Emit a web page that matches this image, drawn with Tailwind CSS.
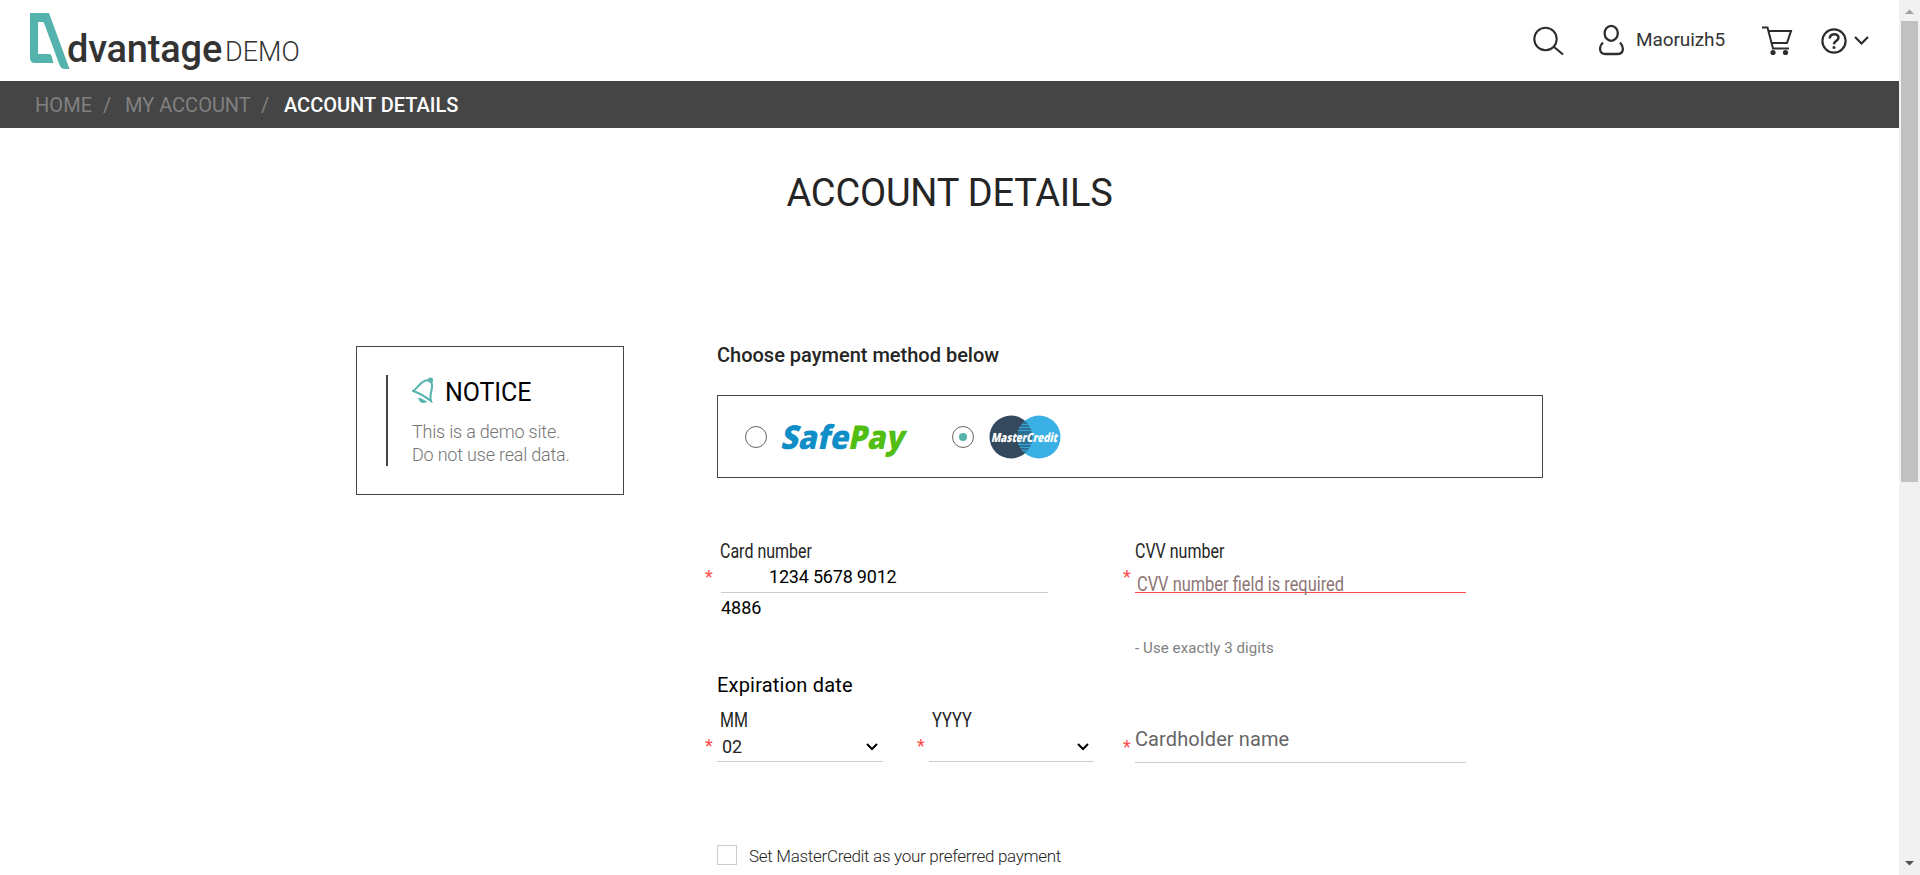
<!DOCTYPE html>
<html lang="en">
<head>
<meta charset="utf-8">
<title>Account details</title>
<script src="https://cdn.jsdelivr.net/npm/@tailwindcss/browser@4"></script>
</head>
<body class="flex h-[875px] overflow-hidden bg-white font-[Roboto,sans-serif] text-[#252525]">
<div class="w-[1899px] h-full overflow-hidden">
  <header class="flex h-[81px] items-start justify-between">
    <a class="flex pl-[29px] pt-[13px] whitespace-nowrap">
      <svg class="w-[41px] h-[57px] shrink-0" viewBox="0 0 41 57"><path fill="#55b3ad" fill-rule="evenodd" d="M1 0H20L40.500 56H36Q32 56 30.500 52L15 10Q14.500 9 13.500 9H9V41H20Q22 41 22.500 43L24.500 50H6Q1 50 1 45Z"/></svg>
      <span class="-ml-[3px] mt-[16px] h-[40px] w-[158px] text-[38px] leading-[40px] font-medium tracking-[-0.2px] text-[#333]">dvantage</span>
      <span class="mt-[19px] h-[40px] text-[27px] leading-[40px] font-light text-[#333]">DEMO</span>
    </a>
    <div class="flex pt-[24px] pr-[29px]">
      <svg class="w-[32px] h-[32px]" viewBox="0 0 32 32" fill="none" stroke="#2d2d2d" stroke-width="2.100"><circle cx="12.500" cy="15" r="11.200"/><path d="M20.500 22.500L30 30.500"/></svg>
      <svg class="ml-[34px] w-[26px] h-[32px]" viewBox="0 0 26 32" fill="none" stroke="#2d2d2d" stroke-width="2.300"><ellipse cx="12.200" cy="9.300" rx="6.600" ry="7.500"/><path d="M4 18.500C0 22 -.5 30 6.500 30H18C26 30 24.500 22 21 18.500"/></svg>
      <span class="ml-[11px] mt-[4px] h-[24px] w-[90px] text-[19px] leading-[24px] tracking-[-0.1px] text-[#333]">Maoruizh5</span>
      <svg class="ml-[36px] w-[32px] h-[32px]" viewBox="0 0 32 32" fill="none" stroke="#2d2d2d" stroke-width="2"><path d="M0 3.500H5.500L11 24.500H27M7 7H29L25 19H10"/><circle cx="11" cy="28.500" r="2.600" fill="#2d2d2d" stroke="none"/><circle cx="23.500" cy="28.500" r="2.600" fill="#2d2d2d" stroke="none"/></svg>
      <svg class="ml-[26px] w-[50px] h-[32px]" viewBox="0 0 50 32" fill="none" stroke="#2d2d2d" stroke-width="2.200"><circle cx="14" cy="17" r="11.600"/><path d="M9.800 14.500C9.800 9 18.500 9 18.500 13.800C18.500 17 14 16.500 14 20.300" stroke-width="2.500"/><circle cx="14" cy="23.600" r="1.500" fill="#2d2d2d" stroke="none"/><path d="M35 13L41.500 19.500L48 13"/></svg>
    </div>
  </header>
  <nav class="flex h-[47px] items-start bg-[#454545] pl-[35px] pt-[12px] text-[20px] leading-[24px] text-[#808080] whitespace-nowrap">
    <span class="w-[68px] tracking-[0.1px]">HOME</span><span class="w-[22px]">/</span>
    <span class="w-[136px]">MY ACCOUNT</span><span class="w-[23px]">/</span>
    <span class="font-medium text-white">ACCOUNT DETAILS</span>
  </nav>
  <h1 class="mt-[41px] flex h-[48px] justify-center text-[38px] leading-[48px] tracking-[-0.2px]">ACCOUNT DETAILS</h1>
  <main class="flex pl-[356px] pt-[126px]">
    <aside class="mt-[3px] h-[149px] w-[268px] shrink-0 border border-[#454545] pl-[29px] pt-[28px]">
      <div class="h-[91px] border-l-2 border-[#454545] pl-[24px]">
        <div class="flex h-[38px]">
          <svg class="mt-[2px] h-[26px] w-[22px]" viewBox="0 0 22 26" fill="none" stroke="#55b3ad" stroke-width="2"><path d="M1 14C6 12 8 3 16.500 3Q20 4 20 8.500C20.500 14 17 17 19 24C15 21 6 15.500 1 14Z"/><circle cx="18.500" cy="3" r="1.600"/><path d="M7.500 22Q9 26 13 24.500L8 22Z"/></svg>
          <span class="ml-[11px] mt-[2px] h-[32px] text-[25px] leading-[32px] tracking-[-0.1px] text-black">NOTICE</span>
        </div>
        <p class="mt-[7px] text-[18px] leading-[23px] font-light tracking-[-0.2px] text-[#757575] whitespace-nowrap">This is a demo site.<br>Do not use real data.</p>
      </div>
    </aside>
    <section class="ml-[93px] w-[826px]">
      <h2 class="h-[24px] text-[20px] leading-[24px] font-medium">Choose payment method below</h2>
      <div class="mt-[28px] flex h-[83px] items-center border border-[#454545] pl-[27px]">
        <span class="size-[22px] rounded-full border border-[#666]"></span>
        <svg class="ml-[13px] h-[54px] w-[130px] overflow-visible" viewBox="0 -5 130 54"><g transform="translate(0 34) skewX(-12)" font-family="Open Sans" font-weight="800" font-size="33"><text x="0" y="0" textLength="68" lengthAdjust="spacingAndGlyphs" fill="#108ec8">Safe</text><text x="67.500" y="0" textLength="56" lengthAdjust="spacingAndGlyphs" fill="#52be14">Pay</text></g></svg>
        <span class="ml-[42px] flex size-[22px] items-center justify-center rounded-full border border-[#666]"><i class="size-[8px] rounded-full bg-[#55b3ad]"></i></span>
        <svg class="ml-[14px] h-[44px] w-[74px]" viewBox="0 0 74 44"><circle cx="23" cy="22" r="21.500" fill="#34495e"/><circle cx="51" cy="22" r="21.500" fill="#3bb0e5"/><path d="M37 5.700A21.500 21.500 0 0 1 37 38.300A21.500 21.500 0 0 1 37 5.700" fill="#2d7194"/><path d="M34 9.500H42M31 12.500H44M30 15.500H45M30 29.500H45M32 32.500H43M34 35.500H41" stroke="#3bb0e5" stroke-width=".8"/><text transform="translate(3 26.500) skewX(-12)" font-family="Open Sans" font-weight="800" font-size="12.500" textLength="66" lengthAdjust="spacingAndGlyphs" fill="#fff">MasterCredit</text></svg>
      </div>
      <form class="-ml-[12px] mt-[61px] flex text-[18px] leading-[24px] text-black whitespace-nowrap">
        <div class="w-[418px]">
          <div class="h-[134px] pl-[15px]">
            <div class="h-[24px] text-[20px] text-[#252525]"><span class="inline-block origin-left scale-x-[.8]">Card number</span></div>
            <div class="flex h-[30px] -ml-[15px] pt-[2px]"><b class="w-[16px] text-[18px] font-normal text-[#ff4b4b]">*</b><span class="h-[28px] w-[327px] border-b border-[#ccc] pl-[48px] tracking-[-0.2px]">1234 5678 9012</span></div>
            <div class="mt-[3px] pl-[1px]">4886</div>
          </div>
          <div class="pl-[12px] text-[20px] tracking-[0.2px]">Expiration date</div>
          <div class="mt-[11px] flex">
            <div class="w-[212px]">
              <div class="h-[24px] pl-[15px] text-[20px] text-[#252525]"><span class="inline-block origin-left scale-x-[.8]">MM</span></div>
              <div class="flex h-[30px]"><b class="w-[12px] pt-[2px] font-normal text-[#ff4b4b]">*</b><span class="flex w-[166px] justify-between border-b border-[#ccc] pl-[5px] pr-[5px] pt-[3px] text-[#252525]"><span>02</span><svg class="mt-[7px] h-[10px] w-[12px]" viewBox="0 0 12 10" fill="none" stroke="#000" stroke-width="2"><path d="M1 2L6 7L11 2"/></svg></span></div>
            </div>
            <div>
              <div class="h-[24px] pl-[15px] text-[20px] text-[#252525]"><span class="inline-block origin-left scale-x-[.82]">YYYY</span></div>
              <div class="flex h-[30px]"><b class="w-[12px] pt-[2px] font-normal text-[#ff4b4b]">*</b><span class="flex w-[165px] justify-end border-b border-[#ccc] pr-[5px] pt-[3px]"><svg class="mt-[7px] h-[10px] w-[12px]" viewBox="0 0 12 10" fill="none" stroke="#000" stroke-width="2"><path d="M1 2L6 7L11 2"/></svg></span></div>
            </div>
          </div>
        </div>
        <div>
          <div class="h-[24px] pl-[12px] text-[20px] text-[#252525]"><span class="inline-block origin-left scale-x-[.8]">CVV number</span></div>
          <div class="flex h-[30px]"><b class="w-[12px] pt-[2px] font-normal text-[#ff4b4b]">*</b><span class="w-[331px] border-b border-[#ff4b4b] pl-[2px] pt-[9px] text-[20px] text-[#8d7575]"><span class="inline-block origin-left scale-x-[.82]">CVV number field is required</span></span></div>
          <div class="mt-[43px] pl-[12px] text-[15px] tracking-[0.1px] text-[#808080]">- Use exactly 3 digits</div>
          <div class="mt-[67px] flex h-[36px]"><b class="w-[12px] pt-[8px] font-normal text-[#ff4b4b]">*</b><span class="w-[331px] border-b border-[#ccc] text-[20px] tracking-[0.1px] text-[#666]">Cardholder name</span></div>
        </div>
      </form>
      <label class="mt-[82px] flex h-[20px]"><span class="size-[20px] border border-[#ccc]"></span><span class="ml-[12px] text-[17px] leading-[22px] font-light tracking-[-0.3px] whitespace-nowrap">Set MasterCredit as your preferred payment</span></label>
    </section>
  </main>
</div>
<div class="flex h-full w-[21px] flex-col items-center bg-[#f1f1f1]">
  <svg class="h-[21px] w-[21px]" viewBox="0 0 21 21"><path d="M6 14L10.500 9.500L15 14Z" fill="#a3a3a3"/></svg>
  <div class="h-[461px] w-[17px] bg-[#c1c1c1]"></div>
  <svg class="mt-auto h-[21px] w-[21px]" viewBox="0 0 21 21"><path d="M6 7L10.500 11.500L15 7Z" fill="#505050"/></svg>
</div>
</body>
</html>
